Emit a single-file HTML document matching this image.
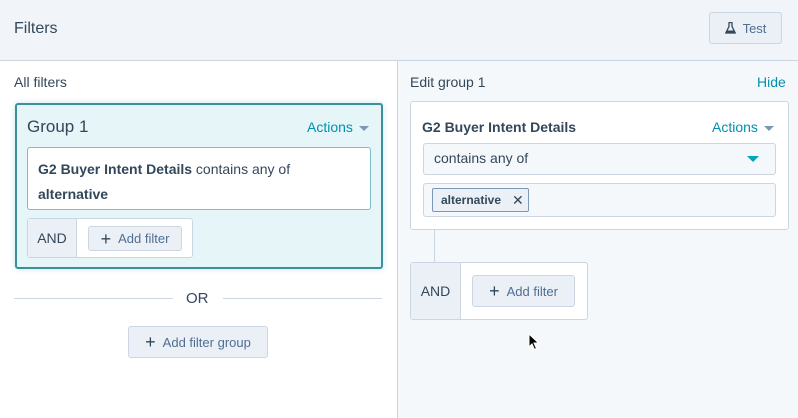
<!DOCTYPE html>
<html><head><style>
*{box-sizing:border-box;margin:0;padding:0}
body{width:798px;height:418px;overflow:hidden;font-family:"Liberation Sans",sans-serif;color:#33475b;background:#f5f8fa;position:relative}
.a{position:absolute}
.btn{position:absolute;background:#eaf0f6;border:1px solid #cbd6e2;border-radius:3px;font-size:13px;color:#506e91;display:flex;align-items:center;justify-content:center;gap:7px}
.plus{font-size:18px;color:#33475b;font-weight:normal;line-height:1}
.teal{color:#0091ae}
.caret{display:inline-block;width:0;height:0;border-left:5px solid transparent;border-right:5px solid transparent;border-top:5px solid #7c98b6;margin-left:6px;vertical-align:middle}
</style></head><body>
<div class="a" style="left:0;top:0;width:798px;height:61px;background:#f1f5f9;border-bottom:1px solid #cbd6e2"></div>
<div class="a" style="left:14px;top:20px;font-size:16px;color:#33475b">Filters</div>
<div class="btn" style="left:709px;top:12px;width:73px;height:32px;color:#506e91"><svg width="11" height="12" viewBox="0 0 11 12"><path d="M3.5 0.5h4M4 0.5v4L0.8 11h9.4L7 4.5v-4" fill="none" stroke="#33475b" stroke-width="1.3"/><path d="M2 8.5h7L10 11H1z" fill="#33475b"/></svg>Test</div>
<div class="a" style="left:0;top:61px;width:398px;height:357px;background:#fff;border-right:1px solid #cbd6e2"></div>
<div class="a" style="left:14px;top:74px;font-size:14px;color:#33475b">All filters</div>
<div class="a" style="left:15px;top:103px;width:368px;height:166px;background:#e5f5f8;border:2px solid #3e8f9c;border-radius:3px;box-shadow:0 0 6px rgba(0,164,189,.25)"></div>
<div class="a" style="left:27px;top:117px;font-size:17px;color:#33475b">Group 1</div>
<div class="a teal" style="left:307px;top:119px;font-size:14px">Actions<span class="caret"></span></div>
<div class="a" style="left:27px;top:147px;width:344px;height:63px;background:#fff;border:1px solid #7fbcc7;border-radius:3px"></div>
<div class="a" style="left:38px;top:157px;font-size:14px;line-height:25px;color:#33475b"><b>G2 Buyer Intent Details</b> contains any of<br><b>alternative</b></div>
<div class="a" style="left:27px;top:218px;width:166px;height:40px;background:#fff;border:1px solid #cbd6e2;border-radius:3px"></div>
<div class="a" style="left:28px;top:219px;width:49px;height:38px;background:#eaf0f6;border-right:1px solid #cbd6e2;font-size:14px;display:flex;align-items:center;justify-content:center">AND</div>
<div class="btn" style="left:88px;top:226px;width:94px;height:25px"><span class="plus">+</span>Add filter</div>
<div class="a" style="left:14px;top:298px;width:159px;height:1px;background:#cbd6e2"></div>
<div class="a" style="left:223px;top:298px;width:159px;height:1px;background:#cbd6e2"></div>
<div class="a" style="left:186px;top:290px;font-size:15px;color:#33475b">OR</div>
<div class="btn" style="left:128px;top:326px;width:140px;height:32px;font-size:13px"><span class="plus">+</span>Add filter group</div>

<div class="a" style="left:410px;top:74px;font-size:14px;color:#33475b">Edit group 1</div>
<div class="a teal" style="left:757px;top:74px;font-size:14px">Hide</div>
<div class="a" style="left:410px;top:101px;width:379px;height:129px;background:#fff;border:1px solid #cbd6e2;border-radius:3px"></div>
<div class="a" style="left:422px;top:119px;font-size:14px;font-weight:bold;color:#33475b">G2 Buyer Intent Details</div>
<div class="a teal" style="left:712px;top:119px;font-size:14px">Actions<span class="caret"></span></div>
<div class="a" style="left:423px;top:143px;width:353px;height:32px;background:#f5f8fa;border:1px solid #cbd6e2;border-radius:3px"></div>
<div class="a" style="left:434px;top:150px;font-size:14px;color:#33475b">contains any of</div>
<div class="a" style="left:747px;top:156px;width:0;height:0;border-left:6px solid transparent;border-right:6px solid transparent;border-top:6px solid #00a4bd"></div>
<div class="a" style="left:423px;top:183px;width:353px;height:34px;background:#f5f8fa;border:1px solid #cbd6e2;border-radius:3px"></div>
<div class="a" style="left:432px;top:188px;width:97px;height:24px;background:#eaf0f6;border:1px solid #7c98b6;border-radius:2px;font-size:12px;font-weight:bold;color:#33475b;display:flex;align-items:center;padding-left:8px">alternative<span style="font-weight:normal;font-size:14px;margin-left:11px">✕</span></div>
<div class="a" style="left:434px;top:230px;width:1px;height:32px;background:#cbd6e2"></div>
<div class="a" style="left:410px;top:262px;width:178px;height:58px;background:#fff;border:1px solid #cbd6e2;border-radius:3px"></div>
<div class="a" style="left:411px;top:263px;width:50px;height:56px;background:#eaf0f6;border-right:1px solid #cbd6e2;font-size:14px;display:flex;align-items:center;justify-content:center">AND</div>
<div class="btn" style="left:472px;top:275px;width:103px;height:32px"><span class="plus">+</span>Add filter</div>
<svg class="a" style="left:528px;top:333px" width="12" height="18" viewBox="0 0 12 18"><path d="M1 1v13l3-3 2.5 5.5 2-1L6 10h4.5z" fill="#000" stroke="#fff" stroke-width="1"/></svg>
</body></html>
